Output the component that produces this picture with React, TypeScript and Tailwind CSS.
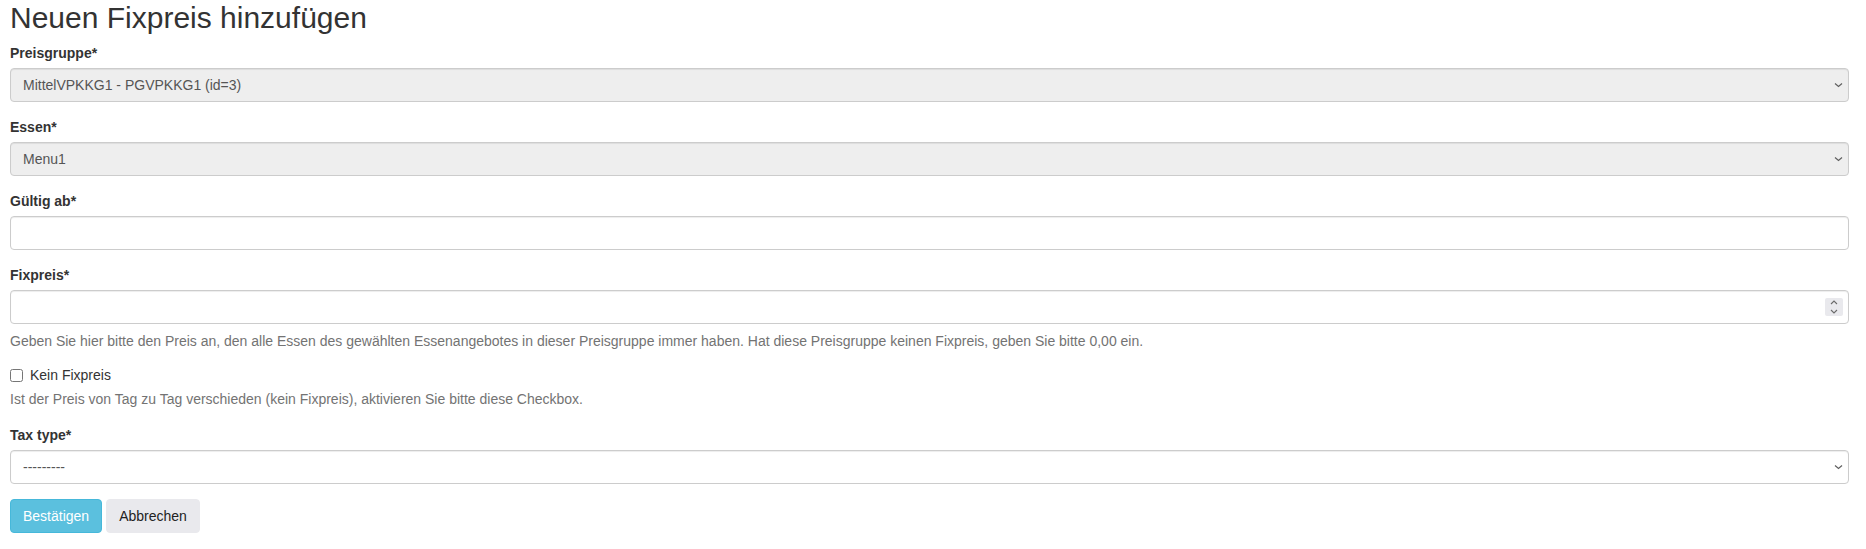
import React from "react";

function Chevron() {
  return (
    <svg
      width="9"
      height="6"
      viewBox="0 0 9 6"
      className="pointer-events-none absolute right-[6px] top-1/2 -translate-y-1/2"
    >
      <path d="M1 1.5l3.5 3 3.5-3" fill="none" stroke="#5f5f5f" strokeWidth="1.2" />
    </svg>
  );
}

function SelectField({
  label,
  value,
  readOnly,
  mt,
}: {
  label: string;
  value: string;
  readOnly?: boolean;
  mt: string;
}) {
  return (
    <div className={mt}>
      <label className="block font-bold leading-5 text-[#333]">{label}</label>
      <div className="relative mt-[5px]">
        <select
          defaultValue={value}
          className={`block h-[34px] w-full appearance-none rounded-[4px] border border-[#ccc] px-[12px] text-sm text-[#555] shadow-[inset_0_1px_1px_rgba(0,0,0,0.075)] ${
            readOnly ? "bg-[#eeeeee]" : "bg-white"
          }`}
        >
          <option value={value}>{value}</option>
        </select>
        <Chevron />
      </div>
    </div>
  );
}

function TextField({ label, mt, spinner }: { label: string; mt: string; spinner?: boolean }) {
  return (
    <div className={mt}>
      <label className="block font-bold leading-5 text-[#333]">{label}</label>
      <div className="relative mt-[5px]">
        <input
          type="text"
          className="block h-[34px] w-full rounded-[4px] border border-[#ccc] bg-white px-[12px] text-sm text-[#555] shadow-[inset_0_1px_1px_rgba(0,0,0,0.075)]"
        />
        {spinner && (
          <div className="absolute right-[6px] top-[8px] flex h-[18px] w-[18px] flex-col items-center justify-center gap-[4px] rounded-[2px] bg-[#e9e9ed]">
            <svg width="8" height="5" viewBox="0 0 8 5">
              <path d="M1 4l3-3 3 3" fill="none" stroke="#6b6b6b" strokeWidth="1.1" />
            </svg>
            <svg width="8" height="5" viewBox="0 0 8 5">
              <path d="M1 1l3 3 3-3" fill="none" stroke="#6b6b6b" strokeWidth="1.1" />
            </svg>
          </div>
        )}
      </div>
    </div>
  );
}

export default function App() {
  return (
    <div className="min-h-[549px] bg-white pl-[10px] pr-[17px] font-['Liberation_Sans',Arial,sans-serif] text-sm leading-5 text-[#333]">
      <h2 className="pt-[1px] text-[30px] leading-[33px] font-normal text-[#333]">
        Neuen Fixpreis hinzufügen
      </h2>

      <form>
        <SelectField label="Preisgruppe*" value="MittelVPKKG1 - PGVPKKG1 (id=3)" readOnly mt="mt-[9px]" />
        <SelectField label="Essen*" value="Menu1" readOnly mt="mt-[15px]" />
        <TextField label="Gültig ab*" mt="mt-[15px]" />
        <TextField label="Fixpreis*" mt="mt-[15px]" spinner />
        <p className="mt-[7px] leading-5 text-[#737373]">
          Geben Sie hier bitte den Preis an, den alle Essen des gewählten Essenangebotes in dieser
          Preisgruppe immer haben. Hat diese Preisgruppe keinen Fixpreis, geben Sie bitte 0,00 ein.
        </p>

        <label className="mt-[14px] flex items-center gap-[7px] leading-5 text-[#333]">
          <input type="checkbox" className="m-0 h-[13px] w-[13px]" />
          Kein Fixpreis
        </label>
        <p className="mt-[4px] leading-5 text-[#737373]">
          Ist der Preis von Tag zu Tag verschieden (kein Fixpreis), aktivieren Sie bitte diese Checkbox.
        </p>

        <SelectField label="Tax type*" value="---------" mt="mt-[16px]" />

        <div className="mt-[15px] flex gap-[4px]">
          <button
            type="button"
            className="h-[34px] rounded-[4px] border border-[#46b8da] bg-[#5bc0de] px-[12px] text-sm text-white"
          >
            Bestätigen
          </button>
          <button
            type="button"
            className="h-[34px] rounded-[4px] border border-[#e9e9ed] bg-[#e9e9ed] px-[12px] text-sm text-[#222]"
          >
            Abbrechen
          </button>
        </div>
      </form>
    </div>
  );
}
